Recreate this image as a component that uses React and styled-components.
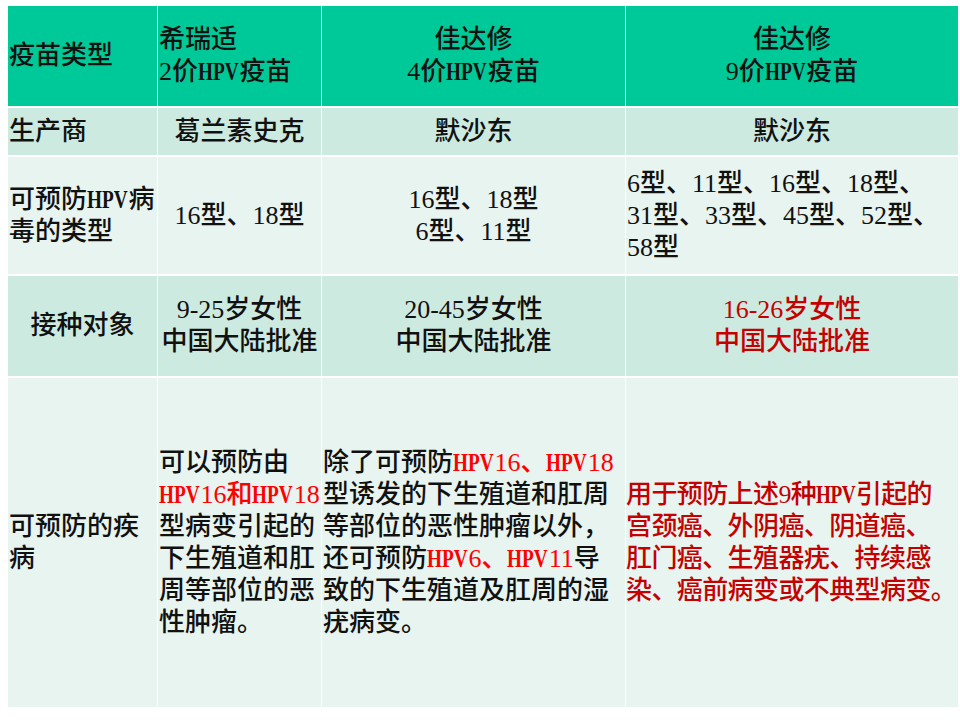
import React from 'react';
import styled, {createGlobalStyle} from "styled-components";

const GlobalStyle = createGlobalStyle`
    body {
        margin: 0;
        background: #ffffff;
        font-family: "Liberation Serif", "Noto Sans CJK SC", serif;
    }
`

const Page = styled.div`
    padding: 6px 0 0 8px;
`

const Table = styled.div`
    display: grid;
    grid-template-columns: 149px 163px 303px 332px;
    grid-template-rows: 100px 47px 117px 100px 329px;
    column-gap: 1px;
    row-gap: 2px;
    width: 950px;
    background: #ffffff;
`

const Cell = styled.div`
    display: flex;
    align-items: center;
    justify-content: ${props => props.center ? 'center' : 'flex-start'};
    text-align: ${props => props.center ? 'center' : 'left'};
    background: ${props => props.bg};
    padding: 0 ${props => props.tight ? '0' : '1px'};
    font-size: 26px;
    line-height: 32px;
    font-weight: 500;
    letter-spacing: ${props => props.tight ? '-0.6px' : 'normal'};
    color: ${props => props.tone || '#111111'};
    white-space: nowrap;
`

const Red = styled.span`
    color: #ff0000;
`

const Abbr = styled.span`
    display: inline-block;
    transform: scaleX(0.74);
    transform-origin: left center;
    margin-right: -0.52em;
    font-weight: 700;
`

const HEAD = '#00c999';
const MINT = '#cdeae0';
const PALE = '#e7f4f0';
const DARK_RED = '#c40000';

// wrap every "HPV" in a narrow span, split lines on "\n"
const txt = (str) => str.split('\n').map((line, i, all) => (
    <React.Fragment key={i}>
        {line.split('HPV').map((part, j, parts) => (
            <React.Fragment key={j}>
                {part}
                {j < parts.length - 1 && <Abbr>HPV</Abbr>}
            </React.Fragment>
        ))}
        {i < all.length - 1 && <br/>}
    </React.Fragment>
));

const rows = [
    {bg: HEAD, cells: [
        {text: '疫苗类型'},
        {text: '希瑞适\n2价HPV疫苗'},
        {text: '佳达修\n4价HPV疫苗', center: true},
        {text: '佳达修\n9价HPV疫苗', center: true},
    ]},
    {bg: MINT, cells: [
        {text: '生产商'},
        {text: '葛兰素史克', center: true},
        {text: '默沙东', center: true},
        {text: '默沙东', center: true},
    ]},
    {bg: PALE, cells: [
        {text: '可预防HPV病\n毒的类型'},
        {text: '16型、18型', center: true},
        {text: '16型、18型\n6型、11型', center: true},
        {text: '6型、11型、16型、18型、\n31型、33型、45型、52型、\n58型'},
    ]},
    {bg: MINT, cells: [
        {text: '接种对象', center: true},
        {text: '9-25岁女性\n中国大陆批准', center: true},
        {text: '20-45岁女性\n中国大陆批准', center: true},
        {text: '16-26岁女性\n中国大陆批准', center: true, tone: DARK_RED},
    ]},
];

const App = () => (
    <Page>
        <GlobalStyle/>
        <Table>
            {rows.map((row, r) => row.cells.map((cell, c) => (
                <Cell key={r + '-' + c} bg={row.bg} center={cell.center} tone={cell.tone}>
                    <div>{txt(cell.text)}</div>
                </Cell>
            )))}
            <Cell bg={PALE}>
                <div>{txt('可预防的疾\n病')}</div>
            </Cell>
            <Cell bg={PALE}>
                <div>
                    可以预防由<br/>
                    <Red>{txt('HPV16和HPV18')}</Red><br/>
                    型病变引起的<br/>
                    下生殖道和肛<br/>
                    周等部位的恶<br/>
                    性肿瘤。
                </div>
            </Cell>
            <Cell bg={PALE}>
                <div>
                    除了可预防<Red>{txt('HPV16、HPV18')}</Red><br/>
                    型诱发的下生殖道和肛周<br/>
                    等部位的恶性肿瘤以外，<br/>
                    还可预防<Red>{txt('HPV6、HPV11')}</Red>导<br/>
                    致的下生殖道及肛周的湿<br/>
                    疣病变。
                </div>
            </Cell>
            <Cell bg={PALE} tone={DARK_RED} tight>
                <div>
                    {txt('用于预防上述9种HPV引起的\n宫颈癌、外阴癌、阴道癌、\n肛门癌、生殖器疣、持续感\n染、癌前病变或不典型病变。')}
                </div>
            </Cell>
        </Table>
    </Page>
);

export default App;
